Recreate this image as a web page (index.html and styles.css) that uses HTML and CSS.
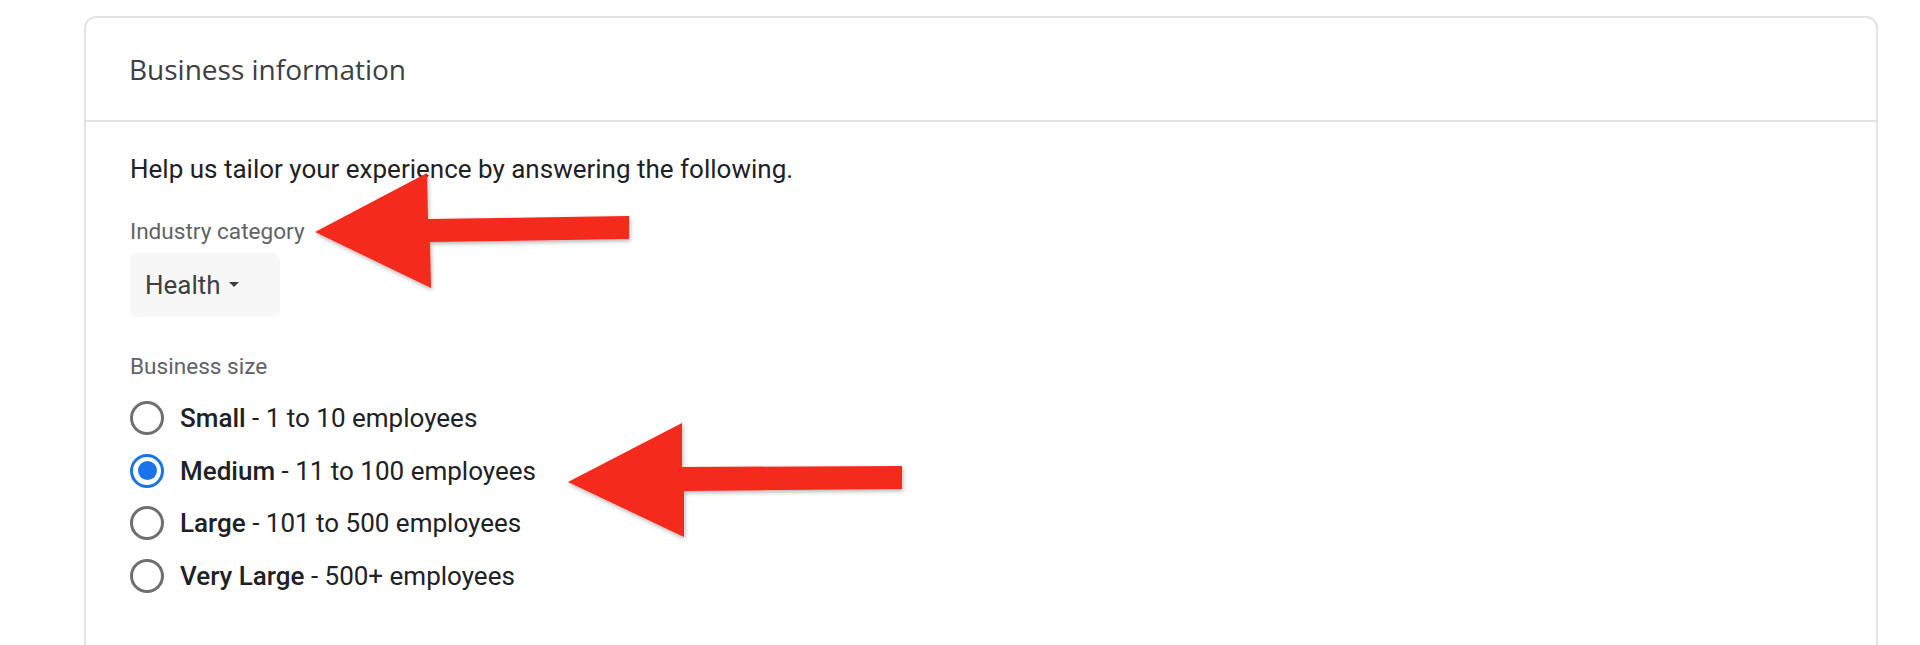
FILE: index.html
```html
<!DOCTYPE html>
<html lang="en">
<head>
<meta charset="utf-8">
<title>Business information</title>
<link rel="stylesheet" href="styles.css">
</head>
<body>
<div class="page">
  <section class="card">
    <header class="card-header">
      <h2 class="card-title">Business information</h2>
    </header>
    <div class="card-body">
      <p class="intro">Help us tailor your experience by answering the following.</p>
      <div class="field-label">Industry category</div>
      <button class="dropdown" type="button">
        <span class="dropdown-value">Health</span>
        <svg class="caret" width="10" height="5" viewBox="0 0 10 5"><path d="M0 0 L5 5 L10 0 Z" fill="#3c4043"/></svg>
      </button>
      <div class="field-label size-label">Business size</div>
      <ul class="radio-list">
        <li class="radio-row"><span class="radio"></span><span class="radio-text"><b>Small</b> - 1 to 10 employees</span></li>
        <li class="radio-row"><span class="radio checked"></span><span class="radio-text"><b>Medium</b> - 11 to 100 employees</span></li>
        <li class="radio-row"><span class="radio"></span><span class="radio-text"><b>Large</b> - 101 to 500 employees</span></li>
        <li class="radio-row"><span class="radio"></span><span class="radio-text"><b>Very Large</b> - 500+ employees</span></li>
      </ul>
    </div>
  </section>
  <svg class="arrows" width="1920" height="645" viewBox="0 0 1920 645">
    <defs>
      <filter id="shadow" x="-10%" y="-20%" width="130%" height="150%">
        <feDropShadow dx="1" dy="2" stdDeviation="2" flood-color="#000" flood-opacity="0.3"/>
      </filter>
    </defs>
    <polygon filter="url(#shadow)" fill="#f4291f" points="315,232 427,173 428,219 629,216 629,239 430,242 431,288"/>
    <polygon filter="url(#shadow)" fill="#f4291f" points="568,482 682,423 682,467 902,466 902,489 684,491 684,537"/>
  </svg>
</div>
</body>
</html>
```
FILE: styles.css
```css
html, body {
  margin: 0;
  padding: 0;
  background: #ffffff;
  overflow: hidden;
}
body {
  font-family: Roboto, "Liberation Sans", Arial, sans-serif;
  color: #202124;
}
.page {
  position: relative;
  width: 1920px;
  height: 645px;
  padding-top: 16px;
  box-sizing: border-box;
}
.card {
  margin: 0 42px 0 84px;
  border: 2px solid #e3e3e3;
  border-radius: 12px;
  background: #fff;
  min-height: 720px;
  box-sizing: border-box;
}
.card-header {
  height: 102px;
  border-bottom: 2px solid #e3e3e3;
  display: flex;
  align-items: center;
  padding: 0 43px;
}
.card-title {
  margin: 0;
  font-family: "Open Sans", Roboto, sans-serif;
  font-weight: 400;
  font-size: 28px;
  line-height: 36px;
  color: #3c4043;
  padding-bottom: 1px;
}
.card-body {
  padding: 29px 44px 40px;
  display: flex;
  flex-direction: column;
  align-items: flex-start;
}
.intro {
  margin: 0;
  font-size: 26px;
  line-height: 36px;
  color: #202124;
}
.field-label {
  margin-top: 28.5px;
  font-size: 22.6px;
  line-height: 32px;
  color: #5f6368;
}
.dropdown {
  margin-top: 5px;
  height: 64px;
  display: flex;
  align-items: center;
  gap: 8px;
  padding: 0 41px 0 15px;
  border: none;
  border-radius: 8px;
  background: #f7f7f7;
  font-family: Roboto, sans-serif;
  font-size: 26px;
  line-height: 30px;
  color: #3c4043;
}
.size-label {
  margin-top: 34px;
}
.radio-list {
  list-style: none;
  margin: 9.5px 0 0;
  padding: 0;
}
.radio-row {
  height: 52.5px;
  display: flex;
  align-items: center;
  gap: 16px;
}
.radio {
  width: 34px;
  height: 34px;
  box-sizing: border-box;
  border: 3.5px solid #6f6f6f;
  border-radius: 50%;
  display: flex;
  align-items: center;
  justify-content: center;
}
.radio.checked {
  border-color: #1a73e8;
}
.radio.checked::after {
  content: "";
  width: 19px;
  height: 19px;
  border-radius: 50%;
  background: #1a73e8;
}
.radio-text {
  font-size: 26px;
  line-height: 32px;
  color: #202124;
}
.radio-text b {
  font-weight: 500;
}
.arrows {
  position: absolute;
  left: 0;
  top: 0;
  pointer-events: none;
}
```
